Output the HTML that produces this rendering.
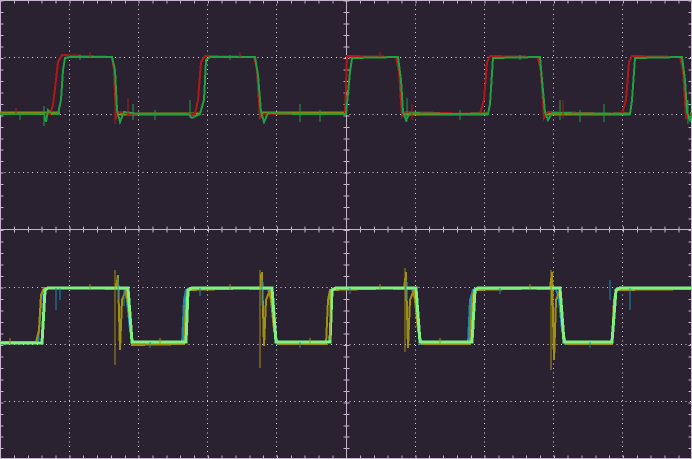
<!DOCTYPE html>
<html><head><meta charset="utf-8"><style>
html,body{margin:0;padding:0;background:#2a2230;}
svg{display:block}
</style></head><body>
<svg width="692" height="459" viewBox="0 0 692 459" xmlns="http://www.w3.org/2000/svg" shape-rendering="crispEdges">
<rect width="692" height="459" fill="#2a2230"/>
<g stroke="#d8d0e0" stroke-width="1" stroke-dasharray="1 3.6">
<line x1="69.5" y1="0" x2="69.5" y2="459"/><line x1="138.5" y1="0" x2="138.5" y2="459"/><line x1="207.5" y1="0" x2="207.5" y2="459"/><line x1="276.5" y1="0" x2="276.5" y2="459"/>
<line x1="415.5" y1="0" x2="415.5" y2="459"/><line x1="484.5" y1="0" x2="484.5" y2="459"/><line x1="553.5" y1="0" x2="553.5" y2="459"/><line x1="622.5" y1="0" x2="622.5" y2="459"/>
<line x1="0" y1="57.5" x2="692" y2="57.5"/><line x1="0" y1="114.5" x2="692" y2="114.5"/><line x1="0" y1="172.5" x2="692" y2="172.5"/>
<line x1="0" y1="287.5" x2="692" y2="287.5"/><line x1="0" y1="344.5" x2="692" y2="344.5"/><line x1="0" y1="401.5" x2="692" y2="401.5"/>
</g>
<g stroke="#c4b4cc" stroke-width="1.2" fill="none">
<rect x="0.5" y="0.5" width="691" height="458"/>
<line x1="0" y1="229.5" x2="692" y2="229.5"/>
<line x1="346.5" y1="0" x2="346.5" y2="459"/>
<line x1="0" y1="229.5" x2="692" y2="229.5" stroke-width="6" stroke-dasharray="1 12.84" stroke-dashoffset="-0.2"/>
<line x1="346.5" y1="0" x2="346.5" y2="459" stroke-width="6" stroke-dasharray="1 10.48" stroke-dashoffset="-0.5"/>
<line x1="0" y1="1" x2="692" y2="1" stroke-width="5" stroke-dasharray="1 12.84" stroke-dashoffset="-0.2"/>
<line x1="0" y1="458" x2="692" y2="458" stroke-width="5" stroke-dasharray="1 12.84" stroke-dashoffset="-0.2"/>
<line x1="1" y1="0" x2="1" y2="459" stroke-width="5" stroke-dasharray="1 10.48" stroke-dashoffset="-0.5"/>
<line x1="691" y1="0" x2="691" y2="459" stroke-width="5" stroke-dasharray="1 10.48" stroke-dashoffset="-0.5"/>
</g>
<g fill="none" stroke-width="3">
<polyline stroke="#8a8a10" points="0,113 60,113"/>
<polyline stroke="#8a8a10" points="120,114 200,114"/>
<polyline stroke="#8a8a10" points="262,113 345,113"/>
<polyline stroke="#8a8a10" points="404,114 488,114"/>
<polyline stroke="#8a8a10" points="548,114 630,114"/>
<polyline stroke="#8a8a10" points="690,114 692,114"/>
</g>
<g fill="none" stroke-width="2">
<polyline stroke="#b01818" points="0,114 50,114 53,105 56,80 58,62 62,55 112,57 114,70 116,118 120,112 130,114 195,114 198,100 201,62 205,56 254,57 257,70 260,118 264,114 345,114 347,56 396,57 399,72 402,116 405,112 480,114 484,100 487,62 490,56 538,57 541,72 544,118 548,112 622,114 626,100 629,62 632,56 680,57 683,70 686,118 692,114"/>
<polyline stroke="#20a040" points="0,114 44,114 46,122 48,110 52,114 58,114 61,100 63,70 65,58 70,57 112,57 115,70 117,110 120,122 124,112 140,114 188,114 192,118 200,114 204,100 206,60 210,57 255,57 258,75 261,112 264,122 268,113 300,114 346,114 350,72 352,58 398,57 401,80 403,112 406,120 410,113 450,114 488,114 490,104 493,58 540,57 542,80 545,112 548,120 552,113 630,114 632,100 635,58 682,57 685,80 687,112 690,120 692,114"/>
</g>
<g stroke="#20a040" stroke-width="1"><line x1="44" y1="106" x2="44" y2="126"/><line x1="133" y1="104" x2="133" y2="120"/><line x1="190" y1="100" x2="190" y2="118"/><line x1="300" y1="104" x2="300" y2="122"/><line x1="407" y1="98" x2="407" y2="122"/><line x1="560" y1="100" x2="560" y2="120"/><line x1="604" y1="104" x2="604" y2="122"/><line x1="688" y1="100" x2="688" y2="124"/>
<line x1="20" y1="112" x2="20" y2="120"/><line x1="80" y1="55" x2="80" y2="60"/><line x1="155" y1="110" x2="155" y2="120"/><line x1="230" y1="55" x2="230" y2="60"/><line x1="320" y1="110" x2="320" y2="122"/><line x1="460" y1="110" x2="460" y2="120"/><line x1="520" y1="55" x2="520" y2="60"/><line x1="580" y1="110" x2="580" y2="122"/></g>
<g stroke="#b01818" stroke-width="1"><line x1="115" y1="102" x2="115" y2="124"/><line x1="128" y1="98" x2="128" y2="116"/><line x1="563" y1="100" x2="563" y2="118"/><line x1="412" y1="104" x2="412" y2="120"/><line x1="90" y1="52" x2="90" y2="57"/><line x1="240" y1="52" x2="240" y2="57"/><line x1="380" y1="52" x2="380" y2="57"/><line x1="16" y1="108" x2="16" y2="114"/></g>
<g fill="none" stroke-width="2">
<polyline stroke="#1a88b8" points="0,343 38,343 40,318 42,292 44,288 124,289 127,300 130,330 133,344 182,344 184,300 186,290 190,288 268,289 271,300 274,330 277,344 326,344 328,300 331,290 334,288 412,289 415,300 418,330 421,344 468,344 470,300 473,290 476,288 556,289 559,300 562,330 565,344 612,344 614,300 617,290 620,288 692,289"/>
<polyline stroke="#a09010" points="0,342 36,342 39,330 41,295 44,288 116,288 118,275 120,350 122,300 126,290 130,320 132,345 184,344 186,300 188,290 260,288 262,272 264,346 266,300 270,290 274,330 278,344 326,344 328,300 330,290 404,288 406,272 408,348 410,300 414,290 418,330 422,344 470,344 472,300 474,290 550,288 552,272 554,360 556,300 560,290 563,330 566,344 612,344 614,300 616,290 692,289"/>
</g>
<g fill="none" stroke-width="3">
<polyline stroke="#80f080" points="0,343 42,343 45,290 48,288 128,288 132,342 140,342 186,342 188,290 192,288 272,288 276,342 330,342 332,290 336,288 416,288 420,342 472,342 475,290 478,288 560,288 564,342 612,342 616,290 620,288 692,288"/>
</g>
<g stroke="#1a88b8" stroke-width="1"><line x1="118" y1="278" x2="118" y2="300"/><line x1="262" y1="280" x2="262" y2="305"/><line x1="406" y1="280" x2="406" y2="300"/><line x1="610" y1="280" x2="610" y2="300"/><line x1="124" y1="290" x2="124" y2="306"/><line x1="56" y1="288" x2="56" y2="310"/><line x1="60" y1="288" x2="60" y2="300"/><line x1="200" y1="288" x2="200" y2="296"/><line x1="350" y1="288" x2="350" y2="294"/><line x1="500" y1="288" x2="500" y2="294"/><line x1="630" y1="288" x2="630" y2="310"/><line x1="150" y1="342" x2="150" y2="348"/><line x1="300" y1="342" x2="300" y2="348"/><line x1="590" y1="342" x2="590" y2="348"/></g>
<g stroke="#a09010" stroke-width="1"><line x1="115" y1="270" x2="115" y2="365"/><line x1="260" y1="270" x2="260" y2="368"/><line x1="405" y1="268" x2="405" y2="352"/><line x1="551" y1="270" x2="551" y2="370"/><line x1="330" y1="290" x2="330" y2="340"/><line x1="160" y1="338" x2="160" y2="344"/><line x1="310" y1="338" x2="310" y2="344"/><line x1="440" y1="338" x2="440" y2="344"/><line x1="10" y1="338" x2="10" y2="344"/><line x1="90" y1="284" x2="90" y2="290"/><line x1="230" y1="284" x2="230" y2="290"/><line x1="380" y1="284" x2="380" y2="290"/><line x1="530" y1="284" x2="530" y2="290"/></g>
</svg>
</body></html>
